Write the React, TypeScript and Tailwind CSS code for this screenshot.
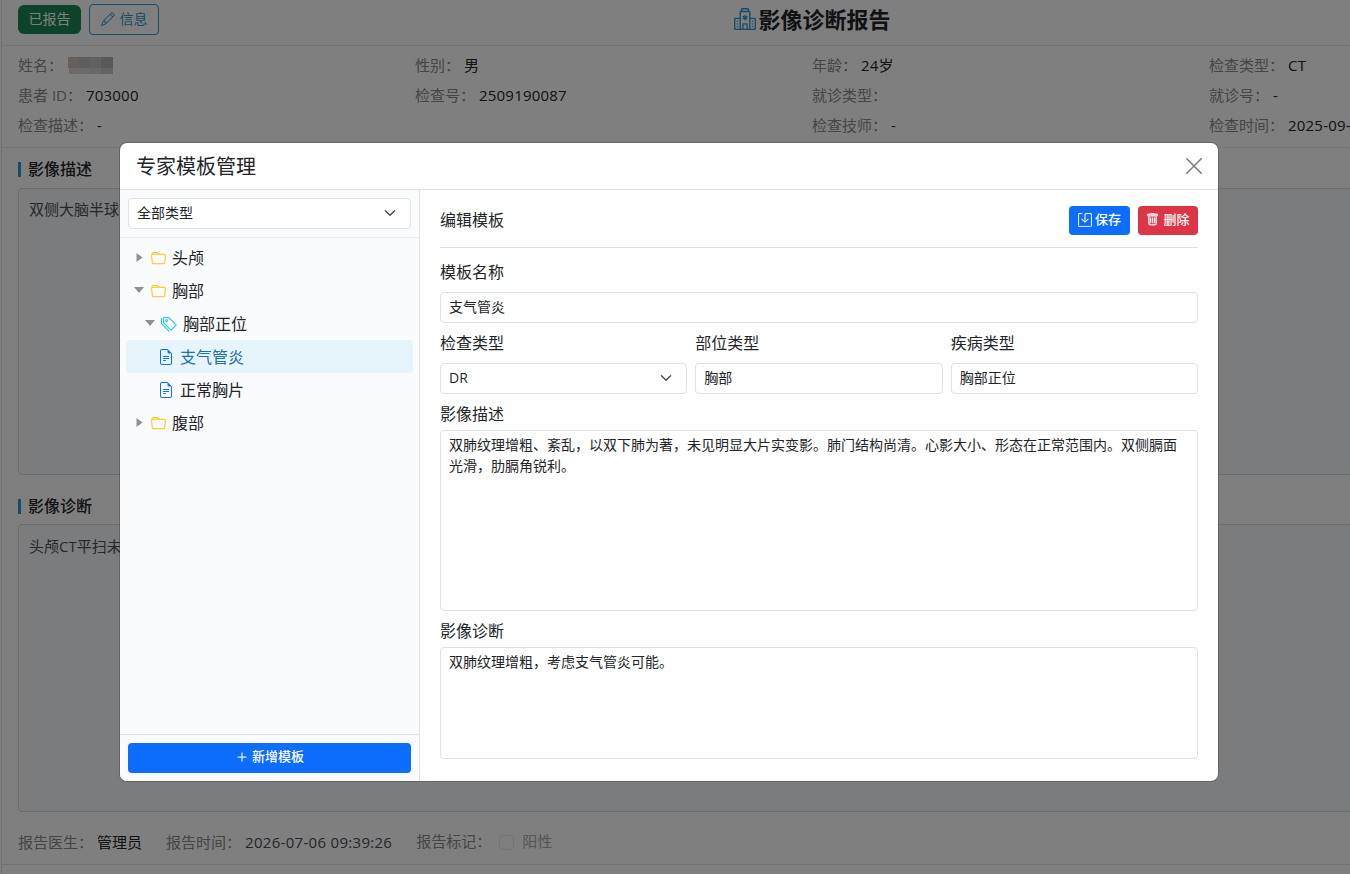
import { BsChevronDown, BsFileEarmarkText, BsFolder, BsHospital, BsPencil, BsPlusLg, BsSave, BsTags, BsTrash } from "react-icons/bs";

const patient = [
	["姓名", "*"],
	["性别", "男"],
	["年龄", "24岁"],
	["检查类型", "CT"],
	["患者 ID", "703000"],
	["检查号", "2509190087"],
	["就诊类型", ""],
	["就诊号", "-"],
	["检查描述", "-"],
	["", ""],
	["检查技师", "-"],
	["检查时间", "2025-09-"],
];

function Mosaic()
{
	return (
		<svg width="46" height="18" className="mt-[7px] ml-[5px]" shapeRendering="crispEdges">
			<rect x="0" y="0" width="11" height="11" fill="#ccc0bb" />
			<rect x="11" y="0" width="11" height="11" fill="#bcbcbe" />
			<rect x="22" y="0" width="11" height="11" fill="#c9c0be" />
			<rect x="33" y="0" width="12" height="11" fill="#b5b3b2" />
			<rect x="1" y="11" width="21" height="6" fill="#d8d6d4" />
			<rect x="22" y="11" width="11" height="6" fill="#d0d0ce" />
			<rect x="33" y="11" width="12" height="6" fill="#c9c7c6" />
		</svg>
	);
}

function ReportSection({ title, text, className }: { title: string; text: string; className: string })
{
	return (
		<div className="px-4">
			<div className="flex h-4 items-center">
				<span className="h-[15px] w-[3px] bg-[#2d96d2]" />
				<h2 className="ml-[7px] text-base leading-4 font-medium text-[#212529]">{title}</h2>
			</div>
			<div className={"rounded border border-[#d5d9dd] bg-[#f6f8fb] px-[10px] text-[15px] leading-[22px] text-[#495057] " + className}>
				{text}
			</div>
		</div>
	);
}

function Report()
{
	return (
		<div className="h-full w-[1622px] shrink-0 border-x border-[#dee2e6] bg-white">
			<div className="flex h-[46px] items-center border-b border-[#e5e8eb] px-4 pb-[7px]">
				<div className="flex flex-1 gap-2">
					<span className="mt-px flex h-[29px] w-[63px] items-center justify-center rounded-md bg-[#198754] text-sm text-white">已报告</span>
					<button className="flex h-[31px] w-[70px] items-center justify-center gap-[5px] rounded border border-[#2d96d2] text-sm text-[#2d96d2]">
						<BsPencil className="size-[14px]" />
						信息
					</button>
				</div>
				<h1 className="flex items-center gap-[3px] text-[22px] leading-[30px] font-bold text-[#212529]">
					<BsHospital className="size-[22px] text-[#2d96d2]" />
					影像诊断报告
				</h1>
				<div className="flex-1" />
			</div>

			<div className="grid h-[102px] grid-cols-4 content-start border-b border-[#e5e8eb] px-4 pt-1 text-[15px] leading-[30px]">
				{patient.map(([label, value], i) => (
					<div key={i} className="flex h-[30px] whitespace-nowrap">
						{label && <span className="text-[#868a8e]">{label}：</span>}
						{value === "*" ? <Mosaic /> : <span className="ml-1 tracking-[0.2px] text-[#212529]">{value}</span>}
					</div>
				))}
			</div>

			<div className="pt-[13px]">
				<ReportSection title="影像描述" text="双侧大脑半球" className="mt-[11px] h-[287px] pt-[9px]" />
			</div>
			<div className="pt-[23px]">
				<ReportSection title="影像诊断" text="头颅CT平扫未" className="mt-[10px] h-[288px] pt-[10px]" />
			</div>

			<div className="flex h-[53px] items-center border-b border-[#dee2e6] px-4 pt-2 text-[15px] text-[#868a8e]">
				报告医生：
				<span className="ml-1 text-[#212529]">管理员</span>
				<span className="ml-6">报告时间：</span>
				<span className="ml-1 tracking-[0.3px] text-[#495057]">2026-07-06 09:39:26</span>
				<span className="-mt-px ml-6">报告标记：</span>
				<span className="ml-2 size-[15px] rounded border border-[#e5e8eb]" />
				<span className="-mt-px ml-2 text-[#a8abae]">阳性</span>
			</div>
		</div>
	);
}

function Caret({ open }: { open?: boolean })
{
	return (
		<svg width="10" height="10" viewBox="0 0 10 10" fill="#8c9196">
			{open ? <path d="M0 1h10L5 7z" /> : <path d="M2.500 0v9L8.500 4.500z" />}
		</svg>
	);
}

function Folder({ name, open }: { name: string; open?: boolean })
{
	return (
		<div className="flex h-[33px] items-center pl-2">
			<Caret open={open} />
			<BsFolder className="mt-px ml-[7px] size-[15px] text-[#ffc107]" />
			<span className="ml-[6px]">{name}</span>
		</div>
	);
}

function Template({ name, active }: { name: string; active?: boolean })
{
	return (
		<div className={"flex h-[33px] items-center rounded pl-8 " + (active ? "bg-[#e6f4fc] text-[#1f6fa8]" : "")}>
			<BsFileEarmarkText className="size-4 text-[#0d6efd]" />
			<span className="ml-[6px]">{name}</span>
		</div>
	);
}

function Sidebar()
{
	return (
		<div className="flex w-[300px] shrink-0 flex-col border-r border-[#dee2e6] bg-[#fafbfd]">
			<div className="border-b border-[#e9ecef] p-2">
				<div className="flex h-[31px] items-center justify-between rounded border border-[#dee2e6] bg-white pr-[14px] pb-[2px] pl-2 text-sm">
					全部类型
					<BsChevronDown className="size-3 stroke-1 text-[#343a40]" />
				</div>
			</div>
			<div className="flex-1 px-[6px] pt-[3px] text-base">
				<Folder name="头颅" />
				<Folder name="胸部" open />
				<div className="flex h-[33px] items-center pl-[19px]">
					<Caret open />
					<BsTags className="ml-[6px] size-4 text-[#0dcaf0]" />
					<span className="ml-[6px]">胸部正位</span>
				</div>
				<Template name="支气管炎" active />
				<Template name="正常胸片" />
				<Folder name="腹部" />
			</div>
			<div className="border-t border-[#dee2e6] p-2">
				<button className="flex h-[30px] w-full items-center justify-center gap-1 rounded bg-[#0d6efd] pb-[2px] pl-px text-[13px] font-medium text-white">
					<BsPlusLg className="size-3 stroke-[0.4]" />
					新增模板
				</button>
			</div>
		</div>
	);
}

function Field({ label, value, select }: { label: string; value: string; select?: boolean })
{
	return (
		<div className="flex-1">
			<p className="text-base leading-6">{label}</p>
			<div className="mt-2 flex h-[31px] items-center justify-between rounded border border-[#dee2e6] bg-white pr-[14px] pb-[2px] pl-2 text-sm">
				{value}
				{select && <BsChevronDown className="mt-px size-3 stroke-1 text-[#343a40]" />}
			</div>
		</div>
	);
}

function Editor()
{
	return (
		<div className="flex-1 px-5 pt-4">
			<div className="flex h-[42px] justify-between border-b border-[#dee2e6]">
				<p className="text-base leading-[29px]">编辑模板</p>
				<div className="flex gap-2 text-[13px] font-medium text-white">
					<button className="flex h-[29px] w-[61px] items-center justify-center gap-[3px] rounded bg-[#0d6efd] pb-[2px]">
						<BsSave className="size-[14px] stroke-[0.2]" />
						保存
					</button>
					<button className="flex h-[29px] w-[60px] items-center justify-center gap-1 rounded bg-[#dc3545] pb-[2px]">
						<BsTrash className="size-[13px] stroke-[0.5]" />
						删除
					</button>
				</div>
			</div>
			<div className="mt-3 flex">
				<Field label="模板名称" value="支气管炎" />
			</div>
			<div className="mt-2 flex gap-2">
				<Field label="检查类型" value="DR" select />
				<Field label="部位类型" value="胸部" />
				<Field label="疾病类型" value="胸部正位" />
			</div>
			<p className="mt-2 text-base leading-6">影像描述</p>
			<div className="mt-1 h-[181px] rounded border border-[#dee2e6] px-2 py-[3px] text-sm leading-[21px]">
				双肺纹理增粗、紊乱，以双下肺为著，未见明显大片实变影。肺门结构尚清。心影大小、形态在正常范围内。双侧膈面光滑，肋膈角锐利。
			</div>
			<p className="mt-2 text-base leading-6">影像诊断</p>
			<div className="mt-1 h-[112px] rounded border border-[#dee2e6] px-2 py-[3px] text-sm leading-[21px]">
				双肺纹理增粗，考虑支气管炎可能。
			</div>
		</div>
	);
}

function App()
{
	return (
		<div className="relative flex h-[874px] w-[1350px] overflow-hidden bg-white pl-px font-['Open_Sans','Noto_Sans_CJK_SC',sans-serif]">
			<Report />
			<div className="absolute inset-0 bg-black/50" />
			<div className="absolute top-[142px] left-[119px] flex h-[640px] w-[1100px] flex-col overflow-hidden rounded-lg border border-black/20 bg-white bg-clip-padding text-[#212529]">
				<div className="flex h-[47px] shrink-0 items-center justify-between border-b border-[#dee2e6] px-4">
					<h3 className="mt-px text-xl leading-[30px]">专家模板管理</h3>
					<svg width="16" height="16" viewBox="0 0 16 16" stroke="#7f7f7f" strokeWidth="1.600" strokeLinecap="round">
						<path d="M.8 .8l14.400 14.400M15.200 .8L.8 15.200" />
					</svg>
				</div>
				<div className="flex min-h-0 flex-1">
					<Sidebar />
					<Editor />
				</div>
			</div>
		</div>
	);
}

export default App;
